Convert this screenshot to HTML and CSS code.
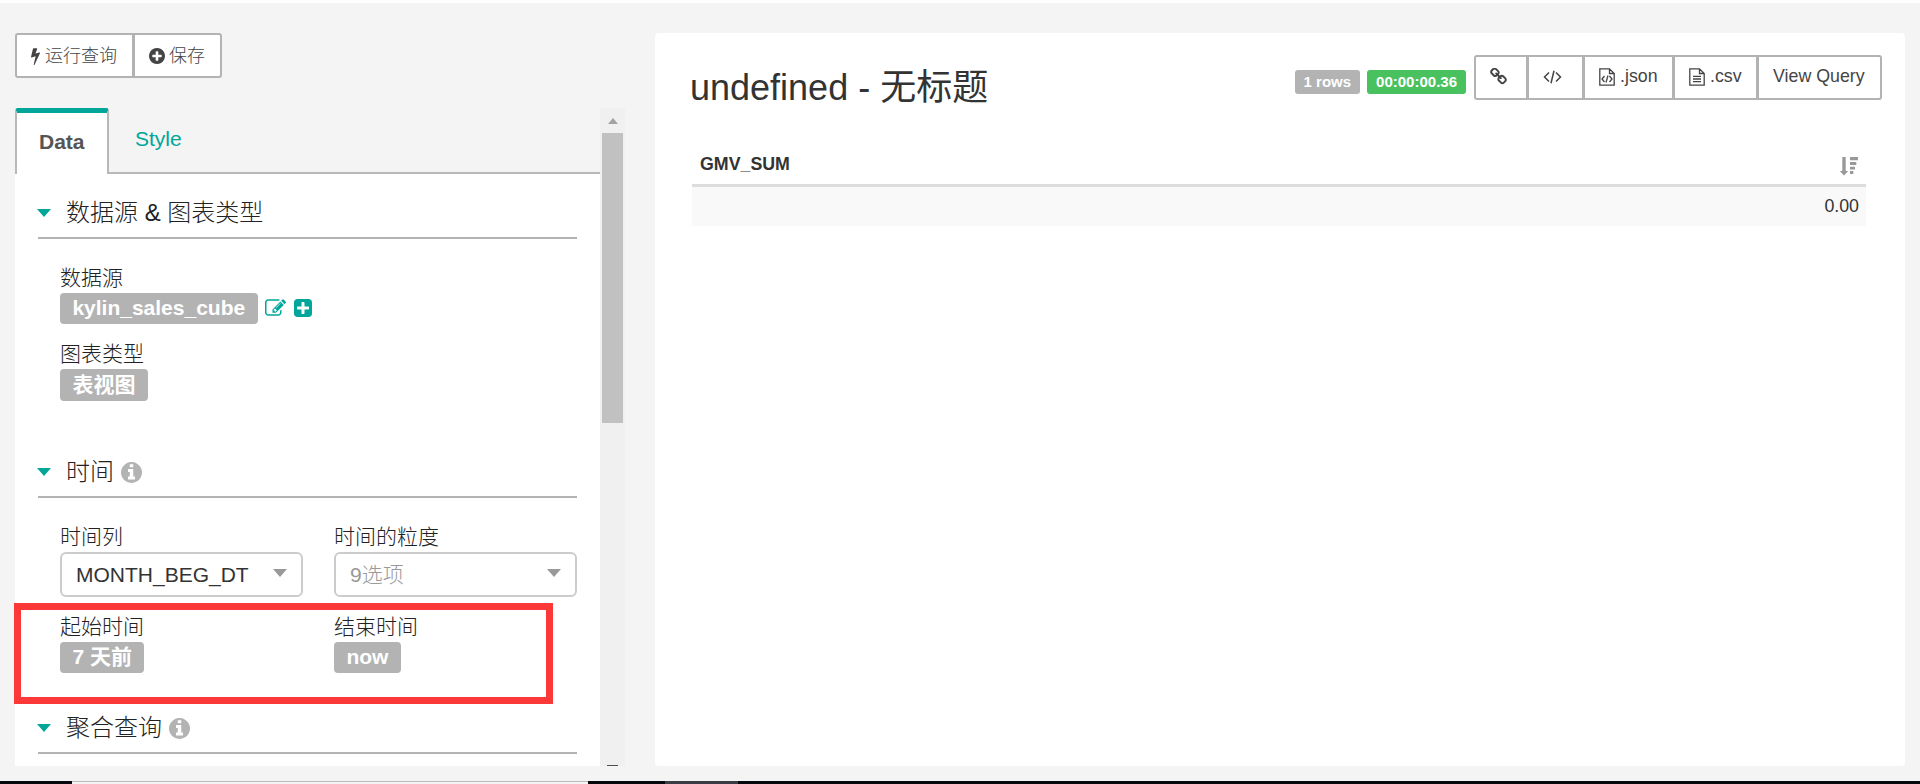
FILE: index.html
```html
<!DOCTYPE html>
<html lang="zh">
<head>
<meta charset="utf-8">
<title>undefined - 无标题</title>
<link rel="stylesheet" href="styles.css">
</head>
<body>
<svg width="0" height="0" class="defs">
  <symbol id="bolt" viewBox="448 0 896 1792"><path d="M1333 566q18 20 7 44l-540 1157q-13 25-42 25-4 0-14-2-17-5-25.500-19t-4.500-30l197-808-406 101q-4 1-12 1-18 0-31-11-18-15-13-39l201-825q4-14 16-23t28-9h328q19 0 32 12.500t13 29.500q0 8-5 18l-171 463 396-98q8-2 12-2 19 0 34 15z"/></symbol>
  <symbol id="plus-circle" viewBox="128 128 1536 1536"><path d="M1344 960v-128q0-26-19-45t-45-19h-256v-256q0-26-19-45t-45-19h-128q-26 0-45 19t-19 45v256h-256q-26 0-45 19t-19 45v128q0 26 19 45t45 19h256v256q0 26 19 45t45 19h128q26 0 45-19t19-45v-256h256q26 0 45-19t19-45zm320-64q0 209-103 385.500t-279.500 279.500-385.500 103-385.500-103-279.500-279.500-103-385.500 103-385.500 279.500-279.500 385.500-103 385.500 103 279.500 279.500 103 385.500z"/></symbol>
  <symbol id="info" viewBox="128 128 1536 1536"><path d="M1152 1376v-160q0-14-9-23t-23-9h-96v-512q0-14-9-23t-23-9h-320q-14 0-23 9t-9 23v160q0 14 9 23t23 9h96v320h-96q-14 0-23 9t-9 23v160q0 14 9 23t23 9h448q14 0 23-9t9-23zm-128-896v-160q0-14-9-23t-23-9h-192q-14 0-23 9t-9 23v160q0 14 9 23t23 9h192q14 0 23-9t9-23zm640 416q0 209-103 385.500t-279.500 279.500-385.500 103-385.500-103-279.500-279.500-103-385.500 103-385.500 279.500-279.500 385.500-103 385.500 103 279.500 279.500 103 385.500z"/></symbol>
  <symbol id="plus-square" viewBox="128 128 1536 1536"><path d="M1408 960v-128q0-26-19-45t-45-19h-320v-320q0-26-19-45t-45-19h-128q-26 0-45 19t-19 45v320h-320q-26 0-45 19t-19 45v128q0 26 19 45t45 19h320v320q0 26 19 45t45 19h128q26 0 45-19t19-45v-320h320q26 0 45-19t19-45zm256-544v960q0 119-84.500 203.500t-203.500 84.500h-960q-119 0-203.500-84.500t-84.500-203.500v-960q0-119 84.500-203.500t203.500-84.500h960q119 0 203.500 84.500t84.500 203.500z"/></symbol>
  <symbol id="edit" viewBox="0 128 1792 1408"><path d="M888 1184l116-116-152-152-116 116v56h96v96h56zm440-720q-16-16-33 1l-350 350q-17 17-1 33t33-1l350-350q17-17 1-33zm80 594v190q0 119-84.500 203.500t-203.500 84.500h-832q-119 0-203.500-84.500t-84.500-203.500v-832q0-119 84.500-203.500t203.500-84.500h832q63 0 117 25 15 7 18 23 3 17-9 29l-49 49q-14 14-32 8-23-6-45-6h-832q-66 0-113 47t-47 113v832q0 66 47 113t113 47h832q66 0 113-47t47-113v-126q0-13 9-22l64-64q15-15 35-7t20 29zm-96-738l288 288-672 672h-288v-288zm444 132l-92 92-288-288 92-92q28-28 68-28t68 28l152 152q28 28 28 68t-28 68z"/></symbol>
  <symbol id="link" viewBox="64 64 1664 1664"><path d="M1520 1216q0-40-28-68l-208-208q-28-28-68-28-42 0-72 32 3 3 19 18.500t21.500 21.500 15 19 13 25.500 3.500 27.500q0 40-28 68t-68 28q-15 0-27.500-3.500t-25.500-13-19-15-21.500-21.500-18.500-19q-33 31-33 73 0 40 28 68l206 207q27 27 68 27 40 0 68-26l147-146q28-28 28-67zm-703-705q0-40-28-68l-206-207q-28-28-68-28-39 0-68 27l-147 146q-28 28-28 67 0 40 28 68l208 208q27 27 68 27 42 0 72-31-3-3-19-18.500t-21.500-21.500-15-19-13-25.500-3.500-27.500q0-40 28-68t68-28q15 0 27.500 3.500t25.500 13 19 15 21.500 21.500 18.500 19q33-31 33-73zm895 705q0 120-85 203l-147 146q-83 83-203 83-121 0-204-85l-206-207q-83-83-83-203 0-123 88-209l-88-88q-86 88-208 88-120 0-204-84l-208-208q-84-84-84-204t85-203l147-146q83-83 203-83 121 0 204 85l206 207q83 83 83 203 0 123-88 209l88 88q86-88 208-88 120 0 204 84l208 208q84 84 84 204z"/></symbol>
  <symbol id="code" viewBox="0 0 19 14"><path d="M6 2.500 1.500 7 6 11.500M13 2.500 17.500 7 13 11.500M11 .8 8 13.200" fill="none" stroke="currentColor" stroke-width="1.500"/></symbol>
  <symbol id="file-code" viewBox="0 0 16 18"><path d="M.8.800H10.500L15.200 5.500V17.200H.8ZM10.500.8V5.500H15.200M5.500 8 3 11l2.500 3M10.500 8l2.500 3-2.500 3M9 7.500 7 14.500" fill="none" stroke="currentColor" stroke-width="1.300"/></symbol>
  <symbol id="file-text" viewBox="0 0 16 18"><path d="M.8.800H10.500L15.200 5.500V17.200H.8ZM10.500.8V5.500H15.200M4 8.300H12M4 11H12M4 13.700H12" fill="none" stroke="currentColor" stroke-width="1.300"/></symbol>
  <symbol id="sort" viewBox="0 0 18 19"><path d="M2.300 0H5.700V14H8.200L4 18.500-.2 14H2.300ZM10 0H18V3.300H10ZM10 5H16.300V8H10ZM10 9.700H15V12.500H10ZM10 14H13.300V17H10Z"/></symbol>
</svg>
<div class="page">
  <aside class="left">
    <div class="btns">
      <button class="btn run"><svg class="i-bolt"><use href="#bolt"/></svg>运行查询</button>
      <button class="btn save"><svg class="i-save"><use href="#plus-circle"/></svg>保存</button>
    </div>
    <div class="scroller">
      <div class="controls">
        <nav class="tabs"><span class="tab active">Data</span><span class="tab">Style</span></nav>
        <section class="section first">
          <h2 class="head"><i class="caret"></i>数据源 &amp; 图表类型</h2>
          <div class="field source">
            <label>数据源</label>
            <div class="line"><span class="tag">kylin_sales_cube</span><svg class="i-edit"><use href="#edit"/></svg><svg class="i-plus"><use href="#plus-square"/></svg></div>
          </div>
          <div class="field">
            <label>图表类型</label>
            <div class="line"><span class="tag tall">表视图</span></div>
          </div>
        </section>
        <section class="section time">
          <h2 class="head"><i class="caret"></i>时间<svg class="i-info"><use href="#info"/></svg></h2>
          <div class="cols">
            <div class="field"><label>时间列</label><div class="select">MONTH_BEG_DT<i class="arrow"></i></div></div>
            <div class="field"><label>时间的粒度</label><div class="select empty">9选项<i class="arrow"></i></div></div>
          </div>
          <div class="cols range">
            <div class="field"><label>起始时间</label><div class="line"><span class="tag">7 天前</span></div></div>
            <div class="field"><label>结束时间</label><div class="line"><span class="tag">now</span></div></div>
          </div>
        </section>
        <section class="section">
          <h2 class="head"><i class="caret"></i>聚合查询<svg class="i-info"><use href="#info"/></svg></h2>
        </section>
      </div>
      <div class="bar"><i class="up"></i><i class="thumb"></i><i class="down"></i></div>
    </div>
  </aside>
  <main class="card">
    <header class="top">
      <h1>undefined - 无标题</h1>
      <div class="actions">
        <span class="badge">1 rows</span>
        <span class="badge ok">00:00:00.36</span>
        <div class="btns">
          <button class="btn b1"><svg class="i-link"><use href="#link"/></svg></button>
          <button class="btn b2"><svg class="i-code"><use href="#code"/></svg></button>
          <button class="btn b3"><svg class="i-file"><use href="#file-code"/></svg>.json</button>
          <button class="btn b4"><svg class="i-file"><use href="#file-text"/></svg>.csv</button>
          <button class="btn b5">View Query</button>
        </div>
      </div>
    </header>
    <div class="table">
      <div class="thead"><span>GMV_SUM</span><svg class="i-sort"><use href="#sort"/></svg></div>
      <div class="row">0.00</div>
    </div>
  </main>
</div>
<footer class="strip"><i class="s1"></i><i class="s2"></i><i class="s3"></i><i class="s4"></i><i class="s5"></i></footer>
<div class="marker"></div>
</body>
</html>
```

FILE: styles.css
```css
* { box-sizing: border-box; }
body {
  margin: 0;
  width: 1920px;
  height: 784px;
  overflow: hidden;
  background: #f4f4f4;
  border-top: 3px solid #fff;
  color: #333;
  font-family: "Liberation Sans", "Noto Sans CJK SC", sans-serif;
  font-size: 21px;
  display: flex;
  flex-direction: column;
}
.defs { position: absolute; }
svg { fill: currentColor; flex: none; }
h1, h2 { margin: 0; font-weight: 300; }
.page { height: 778px; flex: none; padding: 30px 15px 15px; display: flex; gap: 30px; }
.left { width: 610px; display: flex; flex-direction: column; gap: 30px; }
.btns { display: flex; height: 45px; flex: none; }
.btn {
  font: 300 17.8px/1 "Liberation Sans", "Noto Sans CJK SC", sans-serif;
  color: #444;
  background: #fff;
  border: 2px solid #b3b3b3;
  padding: 0 0 0 14px;
  margin: 0 0 0 -1px;
  display: flex;
  align-items: center;
}
.btn:first-child { border-radius: 3px 0 0 3px; margin-left: 0; }
.btn:last-child { border-radius: 0 3px 3px 0; }
.run { width: 119px; font-size: 18px; }
.save { width: 89px; font-size: 18px; }
.i-bolt { width: 9px; height: 18px; margin-right: 5px; }
.i-save { width: 16px; height: 16px; margin-right: 4px; }

.scroller { height: 658px; display: flex; overflow: hidden; }
.controls { width: 585px; background: #fff; }
.tabs { height: 66px; display: flex; background: #f4f4f4; }
.tab { flex: 1; padding: 18px 26px; line-height: 25px; border-bottom: 2px solid #b8b8b8; color: #00a699; }
.tab.active {
  flex: none;
  width: 94px;
  padding: 16px 22px;
  font-weight: bold;
  color: #555;
  background: #fff;
  border: 2px solid #b8b8b8;
  border-top: 5px solid #00a699;
  border-bottom: 0;
  border-radius: 3px 3px 0 0;
}
.section { padding: 0 23px; }
.section.first { height: 275px; padding-top: 16px; }
.section.time { height: 256px; }
.head {
  height: 49px;
  border-bottom: 2px solid #b3b3b3;
  color: #222;
  font-size: 24px;
  line-height: 46px;
  display: flex;
  align-items: center;
  padding-bottom: 1px;
}
.caret { border: 7px solid transparent; border-top: 8px solid #00a699; border-bottom: 0; margin: 0 15px 1px -1px; }
.i-info { width: 21px; height: 21px; color: #b3b3b3; margin-left: 7px; }
.field { margin-left: 22px; }
.field label { display: block; height: 29px; line-height: 27px; font-weight: 300; color: #222; }
.source { margin-top: 25px; margin-bottom: 16px; }
.line { display: flex; align-items: center; }
.tag {
  height: 31px;
  padding: 0 12.4px;
  line-height: 30px;
  border-radius: 4px;
  background: #b3b3b3;
  color: #fff;
  font-weight: bold;
}
.tag.tall { height: 32px; line-height: 31px; }
.i-edit { width: 21px; height: 17px; color: #00a699; margin: -3px 8px 0 7px; }
.i-plus { width: 18px; height: 18px; color: #00a699; margin-top: -2px; }
.cols { display: flex; gap: 9px; margin-top: 25px; }
.cols .field { width: 243px; }
.cols.range { margin-top: 16px; }
.select {
  height: 45px;
  border: 2px solid #ccc;
  border-radius: 6px;
  padding: 0 14px;
  line-height: 40px;
  display: flex;
  align-items: center;
  justify-content: space-between;
}
.select.empty { color: #999; font-weight: 300; }
.arrow { border: 7px solid transparent; border-top: 8px solid #999; border-bottom: 0; margin-top: -4px; }
.bar { width: 25px; background: #f0f0f0; display: flex; flex-direction: column; align-items: center; }
.up { border: 5.5px solid transparent; border-bottom: 6px solid #a3a3a3; border-top: 0; margin: 10px 0 9px; }
.thumb { width: 21px; height: 290px; background: #c1c1c1; }
.down { width: 11px; height: 1px; background: #505050; margin-top: auto; }

.card { width: 1250px; height: 733px; background: #fff; border-radius: 4px; padding: 22px 23px 0 35px; }
.top { display: flex; justify-content: space-between; height: 83px; }
h1 { font-size: 36px; line-height: 66px; font-weight: 400; }
.actions { display: flex; }
.badge {
  height: 24px;
  margin: 15px 7px 0 0;
  padding: 0 9px;
  border-radius: 3px;
  background: #b3b3b3;
  color: #fff;
  font-size: 15px;
  font-weight: bold;
  line-height: 24px;
}
.badge.ok { background: #4ac15f; margin-right: 8px; }
.actions .btn { padding-bottom: 2px; }
.b1 { width: 54px; }
.b2 { width: 57px; }
.b3 { width: 91px; }
.b4 { width: 85px; }
.b5 { width: 125px; }
.i-link { width: 17px; height: 17px; }
.i-code { width: 19px; height: 14px; }
.i-file { width: 16px; height: 18px; margin-right: 5px; }
.table { margin: 0 16px 0 2px; font-size: 17.8px; }
.thead {
  height: 49px;
  padding: 1px 8px 0;
  border-bottom: 3px solid #ddd;
  font-weight: bold;
  display: flex;
  justify-content: space-between;
  align-items: flex-start;
  line-height: 50px;
}
.i-sort { width: 18px; height: 19px; color: #999; margin-top: 18px; }
.row { height: 39px; background: #f9f9f9; text-align: right; padding-right: 7px; line-height: 38px; }

.strip { height: 3px; flex: none; display: flex; }
.s1 { width: 72px; background: #05080d; }
.s2 { width: 516px; border-top: 1px solid #bbb; }
.s3 { width: 77px; background: #05080d; }
.s4 { width: 73px; background: #3b3d45; }
.s5 { flex: 1; background: #05080d; }
/* Highlight frame drawn over the time range controls */
.marker { position: absolute; left: 14px; top: 603px; width: 539px; height: 101px; border: 7px solid #fc3838; }
```
